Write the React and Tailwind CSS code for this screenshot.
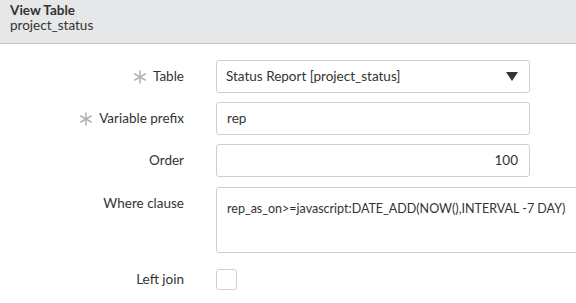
import React from 'react';

const Asterisk = () => (
    <svg width="14" height="14" viewBox="0 0 14 14" className="text-[#b4b4b4] mr-[6px]">
        <g stroke="currentColor" strokeWidth="1.6" strokeLinecap="round">
            <line x1="7" y1="1" x2="7" y2="13" />
            <line x1="1.8" y1="4" x2="12.2" y2="10" />
            <line x1="1.8" y1="10" x2="12.2" y2="4" />
        </g>
    </svg>
);

const Label = ({ children, required, top }) => (
    <div className={`w-[184px] flex justify-end shrink-0 ${top ? 'items-start pt-[6px]' : 'items-center'}`}>
        {required && <Asterisk />}
        <span className="text-[13.5px] text-[#333]">{children}</span>
    </div>
);

export default function App() {
    return (
        <div className="w-[576px] h-[303px] bg-white overflow-hidden font-['Lato',sans-serif] text-[#333]">
            {/* Header */}
            <div className="h-[44px] bg-[#e6e7e8] border-b border-[#c4c4c4] px-[10px] pt-[3px] leading-[15px]">
                <div className="font-bold text-[13.5px] text-[#333]">View Table</div>
                <div className="text-[13.5px] text-[#333]">project_status</div>
            </div>

            {/* Form */}
            <div className="pt-[16px] flex flex-col">
                <div className="flex h-[33px]">
                    <Label required>Table</Label>
                    <div className="ml-[32px] w-[314px] h-[33px] border border-[#cfcfcf] rounded-[3px] flex items-center justify-between pl-[9px] pr-[11px]">
                        <span className="text-[13.5px]">Status Report [project_status]</span>
                        <svg width="12" height="9" viewBox="0 0 12 9">
                            <path d="M0 0 L12 0 L6 9 Z" fill="#333" />
                        </svg>
                    </div>
                </div>

                <div className="flex h-[33px] mt-[9px]">
                    <Label required>Variable prefix</Label>
                    <div className="ml-[32px] w-[314px] h-[33px] border border-[#cfcfcf] rounded-[3px] flex items-center pl-[10px]">
                        <span className="text-[13.5px]">rep</span>
                    </div>
                </div>

                <div className="flex h-[33px] mt-[9px]">
                    <Label>Order</Label>
                    <div className="ml-[32px] w-[314px] h-[33px] border border-[#cfcfcf] rounded-[3px] flex items-center justify-end pr-[11px]">
                        <span className="text-[13.5px]">100</span>
                    </div>
                </div>

                <div className="flex h-[66px] mt-[10px]">
                    <Label top>Where clause</Label>
                    <div className="ml-[32px] w-[400px] shrink-0 h-[66px] border border-[#cfcfcf] rounded-[3px] pl-[10px] pt-[7px] whitespace-nowrap">
                        <span className="text-[12.5px]">rep_as_on&gt;=javascript:DATE_ADD(NOW(),INTERVAL -7 DAY)</span>
                    </div>
                </div>

                <div className="flex h-[21px] mt-[16px]">
                    <Label>Left join</Label>
                    <div className="ml-[32px] w-[21px] h-[21px] border border-[#cfcfcf] rounded-[3px]" />
                </div>
            </div>
        </div>
    );
}
